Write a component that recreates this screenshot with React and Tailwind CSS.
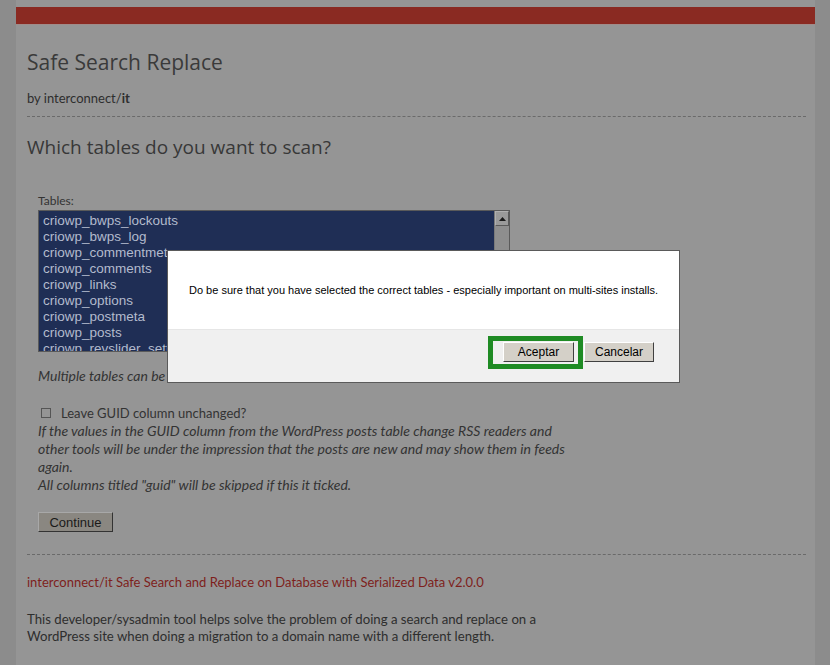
import React from 'react';

const TABLES = [
  'criowp_bwps_lockouts',
  'criowp_bwps_log',
  'criowp_commentmeta',
  'criowp_comments',
  'criowp_links',
  'criowp_options',
  'criowp_postmeta',
  'criowp_posts',
  'criowp_revslider_settings',
  'criowp_revslider_slides',
  'criowp_terms',
];

const sans = { fontFamily: '"Open Sans", "Noto Sans", sans-serif' };
const body = { fontFamily: 'Lato, "Open Sans", sans-serif' };
const arial = { fontFamily: '"Liberation Sans", Arial, sans-serif' };

function WinButton({ children, className = '' }) {
  return (
    <button
      className={`h-[20px] border border-t-white border-l-white border-r-[#404040] border-b-[#404040] bg-[#d4d0c8] text-[12px] text-black leading-none ${className}`}
      style={arial}
    >
      {children}
    </button>
  );
}

export default function App() {
  return (
    <div className="relative h-[665px] w-[830px] overflow-hidden bg-[#8c8c8c]">
      <div className="ml-4 w-[799px] h-full bg-[#959595]">
        <div className="pt-[7px]">
          <div className="h-[18px] bg-[#8a2a22] border-b border-[#a08c8a]" />
        </div>

        <div className="pl-[11px] pr-[9px]">
          <h1 className="mt-[23px] h-[28px] leading-[28px] text-[21px] text-[#3a3a3a]" style={sans}>
            Safe Search Replace
          </h1>
          <p className="mt-[13px] h-[18px] leading-[18px] text-[13px] text-[#2e2e2e]" style={body}>
            by interconnect/<b>it</b>
          </p>
          <div className="mt-[9px] border-t border-dashed border-[#6a6a6a]" />

          <h2 className="mt-[17px] h-[26px] leading-[26px] text-[19px] text-[#383838]" style={sans}>
            Which tables do you want to scan?
          </h2>

          <div className="pl-[11px]">
            <div className="mt-[33px] h-[16px] leading-[16px] text-[12px] text-[#333]" style={body}>
              Tables:
            </div>
            <div className="mt-[1px] flex h-[142px] w-[472px] border border-[#5a5a5a] bg-[#1f2e55]">
              <div className="flex-1 overflow-hidden pl-[4px] pt-[2px]" style={arial}>
                {TABLES.map(t => (
                  <div key={t} className="h-[16px] leading-[16px] text-[13.5px] text-[#b3bbcd]">
                    {t}
                  </div>
                ))}
              </div>
              <div className="w-[15px] bg-[#8e8e8e] border-l border-[#7a7a7a]">
                <div className="h-[15px] bg-[#9a9a9a] border border-t-[#b0b0b0] border-l-[#b0b0b0] border-r-[#5a5a5a] border-b-[#5a5a5a] flex items-center justify-center">
                  <svg width="7" height="4" viewBox="0 0 7 4"><path d="M0 4 L3.5 0 L7 4 Z" fill="#1a1a1a" /></svg>
                </div>
              </div>
            </div>

            <p className="mt-[15px] h-[18px] leading-[18px] text-[14px] italic text-[#333]" style={body}>
              Multiple tables can be selected with ctrl/cmd click.
            </p>

            <label className="mt-[19px] flex h-[18px] items-center leading-[18px] text-[13px] text-[#333]" style={body}>
              <span className="ml-[3px] mr-[10px] h-[10px] w-[10px] border border-[#555] bg-[#959595]" />
              Leave GUID column unchanged?
            </label>
            <div className="text-[14px] italic leading-[18px] text-[#333]" style={body}>
              <p className="w-[535px]">
                If the values in the GUID column from the WordPress posts table change RSS readers and other tools will be under the impression that the posts are new and may show them in feeds again.
              </p>
              <p>All columns titled "guid" will be skipped if this it ticked.</p>
            </div>

            <button
              className="mt-[18px] h-[20px] w-[75px] border border-t-[#a8a8a8] border-l-[#a8a8a8] border-r-[#333] border-b-[#333] bg-[#8a8781] text-[13px] leading-none text-[#1a1a1a]"
              style={arial}
            >
              Continue
            </button>
          </div>

          <div className="mt-[21px] border-t border-dashed border-[#6a6a6a]" />

          <p className="mt-[18px] h-[18px] leading-[18px] text-[13px] text-[#7e1f1c]" style={body}>
            interconnect/it Safe Search and Replace on Database with Serialized Data v2.0.0
          </p>
          <p className="mt-[20px] w-[525px] text-[13.2px] leading-[17px] text-[#2e2e2e]" style={body}>
            This developer/sysadmin tool helps solve the problem of doing a search and replace on a WordPress site when doing a migration to a domain name with a different length.
          </p>
        </div>
      </div>

      {/* confirm dialog */}
      <div className="absolute left-[167px] top-[250px] w-[513px] border border-[#5a5a5a] bg-white">
        <div className="flex h-[78px] items-center pl-[21px] text-[11px] text-black" style={arial}>
          Do be sure that you have selected the correct tables - especially important on multi-sites installs.
        </div>
        <div className="flex h-[53px] justify-end gap-[10px] border-t border-[#e6e6e6] bg-[#f0f0f0] pr-[25px] pt-[12px]">
          <WinButton className="w-[71px]">Aceptar</WinButton>
          <WinButton className="w-[70px]">Cancelar</WinButton>
        </div>
        <div className="absolute left-[320px] top-[85px] h-[33px] w-[95px] border-[5px] border-[#1f8b24]" />
      </div>
    </div>
  );
}
